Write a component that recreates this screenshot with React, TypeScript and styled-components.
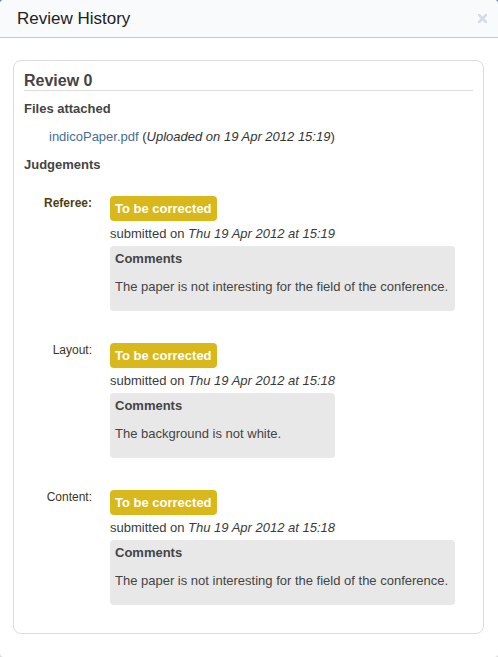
import React from "react";
import styled, { createGlobalStyle } from "styled-components";

const Global = createGlobalStyle`
  html {
    background: linear-gradient(to bottom, #6c81a5 0%, #9aa6b8 50%, #dcdcdc 100%);
  }
  body {
    margin: 0;
    font-family: "Liberation Sans", Arial, sans-serif;
    font-size: 13px;
    color: #444;
  }
`;

const Dialog = styled.div`
  box-sizing: border-box;
  height: 657px;
  background: #fff;
  border-radius: 4px;
  overflow: hidden;
  display: flex;
  flex-direction: column;
`;

const Header = styled.div`
  height: 38px;
  box-sizing: border-box;
  background: #f9fafc;
  border-bottom: 1px solid #c9c9c9;
  display: flex;
  align-items: center;
  justify-content: space-between;
  padding: 0 11px 0 17px;
`;

const Title = styled.h1`
  margin: 0;
  font-size: 17px;
  font-weight: normal;
  color: #222;
  line-height: 20px;
`;

const Close = styled.button`
  border: 0;
  background: none;
  padding: 0;
  width: 9px;
  height: 9px;
  display: flex;
  cursor: pointer;
`;

const Body = styled.div`
  padding: 22px 14px 0 13px;
`;

const Card = styled.section`
  border: 1px solid #dcdcdc;
  border-radius: 8px;
  padding: 10px 10px 28px;
`;

const ReviewTitle = styled.h2`
  margin: 0;
  font-size: 16px;
  line-height: 19px;
  font-weight: bold;
  color: #444;
  border-bottom: 1px solid #dcdcdc;
`;

const SectionTitle = styled.h3<{ $top: number }>`
  margin: ${(p) => p.$top}px 0 0;
  font-size: 13px;
  line-height: 16px;
  font-weight: bold;
  color: #444;
`;

const FileLine = styled.div`
  margin-top: 12px;
  padding-left: 25px;
  line-height: 16px;
  color: #333;
`;

const FileLink = styled.a`
  color: #476e96;
  text-decoration: none;
`;

const Judgements = styled.div`
  margin-top: 23px;
  display: grid;
  grid-template-columns: 68px 1fr;
  column-gap: 18px;
  row-gap: 32px;
`;

const Label = styled.div<{ $bold?: boolean }>`
  text-align: right;
  font-size: 12px;
  line-height: 14px;
  font-weight: ${(p) => (p.$bold ? "bold" : "normal")};
  color: ${(p) => (p.$bold ? "#4e3e12" : "#3b3418")};
`;

const Entry = styled.div`
  width: fit-content;
  display: flex;
  flex-direction: column;
  align-items: stretch;
`;

const Badge = styled.span`
  align-self: flex-start;
  height: 25px;
  line-height: 25px;
  padding: 0 5px;
  background: #d9b81b;
  border-radius: 4px;
  color: #fff;
  font-weight: bold;
  font-size: 13px;
`;

const Submitted = styled.div`
  margin-top: 5px;
  line-height: 16px;
  color: #3a3a3a;
`;

const CommentBox = styled.div`
  margin-top: 4px;
  background: #e8e8e8;
  border-radius: 4px;
  padding: 5px 7px 16px 5px;
`;

const CommentTitle = styled.div`
  font-weight: bold;
  line-height: 16px;
  color: #444;
`;

const CommentText = styled.p`
  margin: 12px 0 0;
  line-height: 16px;
  color: #444;
`;

const judgements = [
  { label: "Referee:", bold: true, time: "15:19", comment: "The paper is not interesting for the field of the conference." },
  { label: "Layout:", bold: false, time: "15:18", comment: "The background is not white." },
  { label: "Content:", bold: false, time: "15:18", comment: "The paper is not interesting for the field of the conference." },
];

export default function App() {
  return (
    <>
      <Global />
      <Dialog>
        <Header>
          <Title>Review History</Title>
          <Close aria-label="close">
            <svg width="9" height="9" viewBox="0 0 9 9">
              <path d="M1 1L8 8M8 1L1 8" stroke="#d2dcea" strokeWidth="2.6" strokeLinecap="square" />
            </svg>
          </Close>
        </Header>
        <Body>
          <Card>
            <ReviewTitle>Review 0</ReviewTitle>
            <SectionTitle $top={10}>Files attached</SectionTitle>
            <FileLine>
              <FileLink href="#">indicoPaper.pdf</FileLink> (<i>Uploaded on 19 Apr 2012 15:19</i>)
            </FileLine>
            <SectionTitle $top={12}>Judgements</SectionTitle>
            <Judgements>
              {judgements.map((j) => (
                <React.Fragment key={j.label}>
                  <Label $bold={j.bold}>{j.label}</Label>
                  <Entry>
                    <Badge>To be corrected</Badge>
                    <Submitted>
                      submitted on <i>Thu 19 Apr 2012 at {j.time}</i>
                    </Submitted>
                    <CommentBox>
                      <CommentTitle>Comments</CommentTitle>
                      <CommentText>{j.comment}</CommentText>
                    </CommentBox>
                  </Entry>
                </React.Fragment>
              ))}
            </Judgements>
          </Card>
        </Body>
      </Dialog>
    </>
  );
}
